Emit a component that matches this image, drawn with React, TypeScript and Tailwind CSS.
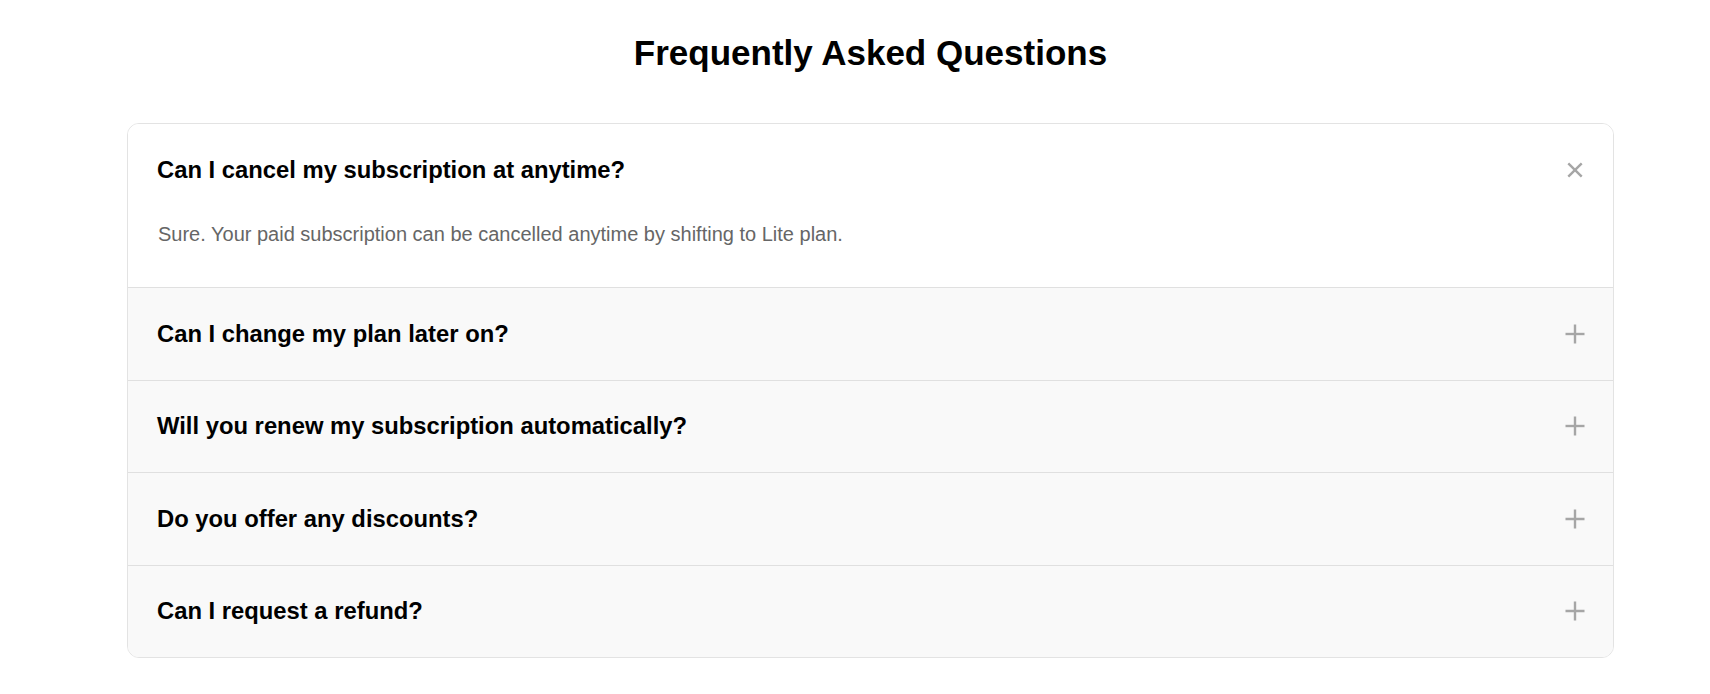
import { useState } from "react";

const faqs = [
  {
    q: "Can I cancel my subscription at anytime?",
    a: "Sure. Your paid subscription can be cancelled anytime by shifting to Lite plan.",
  },
  {
    q: "Can I change my plan later on?",
    a: "Yes. You can upgrade or downgrade your plan at any time from your account settings.",
  },
  {
    q: "Will you renew my subscription automatically?",
    a: "Yes. Subscriptions renew automatically at the end of each billing period unless cancelled.",
  },
  {
    q: "Do you offer any discounts?",
    a: "We offer discounts on annual plans and for students and non-profits.",
  },
  {
    q: "Can I request a refund?",
    a: "Refunds can be requested within 14 days of your purchase.",
  },
];

const PlusIcon = ({ open }: { open: boolean }) => (
  <svg
    viewBox="0 0 20 20"
    className={`h-5 w-5 shrink-0 text-[#a6a6a6] transition-transform ${open ? "rotate-45" : ""}`}
    fill="none"
    stroke="currentColor"
    strokeWidth={2.4}
  >
    <line x1="10" y1="0.5" x2="10" y2="19.5" />
    <line x1="0.5" y1="10" x2="19.5" y2="10" />
  </svg>
);

export default function App() {
  const [open, setOpen] = useState(0);

  return (
    <div className="min-h-screen bg-white font-['Liberation_Sans',Arial,sans-serif]">
      <div className="pl-[127px] pr-[96px] pt-[30px]">
        <h1 className="text-center text-[35px] font-bold leading-[46px] text-black">
          Frequently Asked Questions
        </h1>

        {/* Accordion */}
        <div className="mt-[47px] overflow-hidden rounded-xl border border-[#e3e3e3]">
          {faqs.map((item, i) => {
            const isOpen = open === i;
            return (
              <div
                key={item.q}
                className={`${i > 0 ? "border-t border-[#e0e0e0]" : ""} ${isOpen ? "bg-white" : "bg-[#f9f9f9]"}`}
              >
                <button
                  onClick={() => setOpen(isOpen ? -1 : i)}
                  className="flex h-[91.5px] w-full items-center justify-between pl-[29px] pr-[28px] text-left"
                >
                  <span className="text-[23.8px] font-bold leading-7 text-black">{item.q}</span>
                  <PlusIcon open={isOpen} />
                </button>
                {isOpen && (
                  <p className="px-[30px] pb-[39.5px] pt-1 text-[20px] leading-7 text-[#666666]">{item.a}</p>
                )}
              </div>
            );
          })}
        </div>
      </div>
    </div>
  );
}
